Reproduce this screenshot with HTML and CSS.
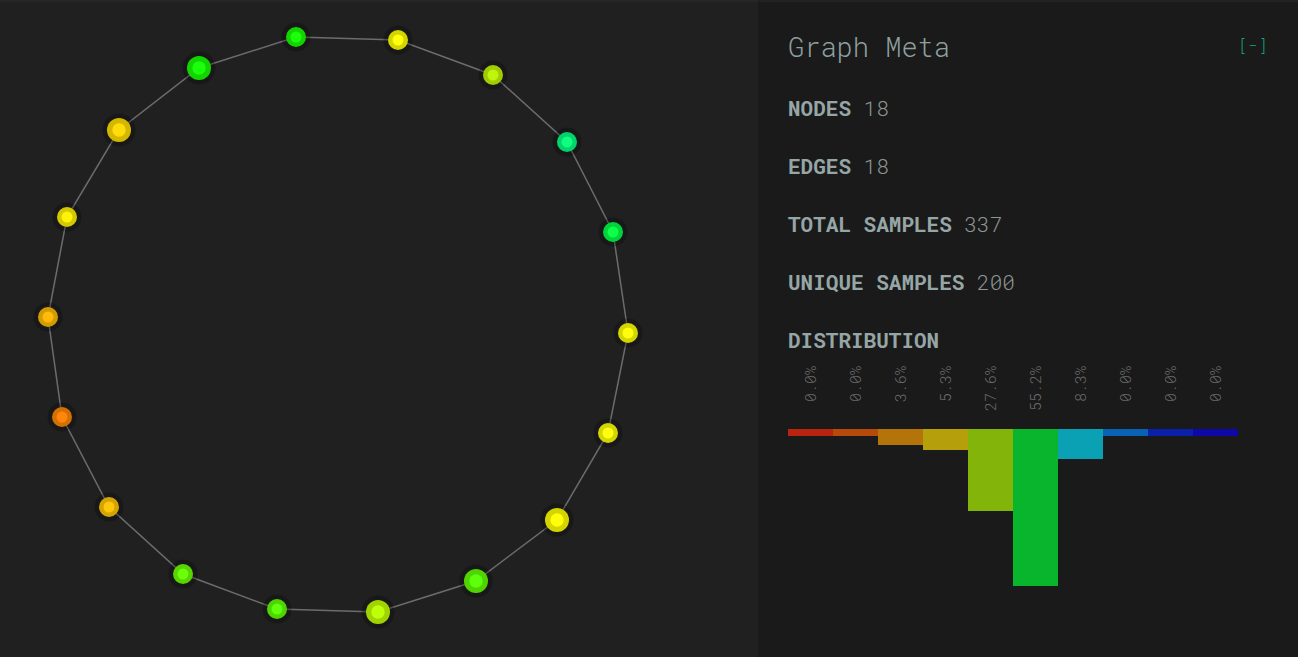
FILE: index.html
```html
<!DOCTYPE html>
<html lang="en">
<head>
    <meta charset="UTF-8">
    <meta name="viewport" content="width=device-width, initial-scale=1.0">
    <title>Graph Meta</title>
    <link rel="stylesheet" href="styles.css">
</head>
<body>
    <div class="graph-view">
        <svg class="graph" width="758" height="657" viewBox="0 0 758 657">
            <polygon class="edges" points="296,37 398,40 493,75 567,142 613,232 628,333 608,433 557,520 476,581 378,612 277,609 183,574 109,507 62,417 48,317 67,217 119,130 199,68"/>
            <g class="node"><circle class="halo" cx="296" cy="37" r="14.5"/><circle cx="296" cy="37" r="10" fill="#12d400"/><circle cx="296" cy="37" r="5.5" fill="#1cff0b"/></g>
            <g class="node"><circle class="halo" cx="398" cy="40" r="14.5"/><circle cx="398" cy="40" r="10" fill="#d4d400"/><circle cx="398" cy="40" r="5.5" fill="#ffff0d"/></g>
            <g class="node"><circle class="halo" cx="493" cy="75" r="14.5"/><circle cx="493" cy="75" r="10" fill="#a0cc00"/><circle cx="493" cy="75" r="5.5" fill="#bff50a"/></g>
            <g class="node"><circle class="halo" cx="567" cy="142" r="14.5"/><circle cx="567" cy="142" r="10" fill="#00d46a"/><circle cx="567" cy="142" r="5.5" fill="#10ff80"/></g>
            <g class="node"><circle class="halo" cx="613" cy="232" r="14.5"/><circle cx="613" cy="232" r="10" fill="#00d43a"/><circle cx="613" cy="232" r="5.5" fill="#0dff4a"/></g>
            <g class="node"><circle class="halo" cx="628" cy="333" r="14.5"/><circle cx="628" cy="333" r="10" fill="#d4d400"/><circle cx="628" cy="333" r="5.5" fill="#ffff0a"/></g>
            <g class="node"><circle class="halo" cx="608" cy="433" r="14.5"/><circle cx="608" cy="433" r="10" fill="#d4d400"/><circle cx="608" cy="433" r="5.5" fill="#ffff0a"/></g>
            <g class="node"><circle class="halo" cx="557" cy="520" r="16.5"/><circle cx="557" cy="520" r="12" fill="#d4d400"/><circle cx="557" cy="520" r="6.7" fill="#ffff0a"/></g>
            <g class="node"><circle class="halo" cx="476" cy="581" r="16.5"/><circle cx="476" cy="581" r="12" fill="#4fd400"/><circle cx="476" cy="581" r="6.7" fill="#5eff0a"/></g>
            <g class="node"><circle class="halo" cx="378" cy="612" r="16.5"/><circle cx="378" cy="612" r="12" fill="#a0d400"/><circle cx="378" cy="612" r="6.7" fill="#c0ff0a"/></g>
            <g class="node"><circle class="halo" cx="277" cy="609" r="14.5"/><circle cx="277" cy="609" r="10" fill="#50d400"/><circle cx="277" cy="609" r="5.5" fill="#60ff0b"/></g>
            <g class="node"><circle class="halo" cx="183" cy="574" r="14.5"/><circle cx="183" cy="574" r="10" fill="#58d400"/><circle cx="183" cy="574" r="5.5" fill="#6bff0a"/></g>
            <g class="node"><circle class="halo" cx="109" cy="507" r="14.5"/><circle cx="109" cy="507" r="10" fill="#d4a500"/><circle cx="109" cy="507" r="5.5" fill="#ffc60a"/></g>
            <g class="node"><circle class="halo" cx="62" cy="417" r="14.5"/><circle cx="62" cy="417" r="10" fill="#d47000"/><circle cx="62" cy="417" r="5.5" fill="#ff860a"/></g>
            <g class="node"><circle class="halo" cx="48" cy="317" r="14.5"/><circle cx="48" cy="317" r="10" fill="#d49b00"/><circle cx="48" cy="317" r="5.5" fill="#ffba0a"/></g>
            <g class="node"><circle class="halo" cx="67" cy="217" r="14.5"/><circle cx="67" cy="217" r="10" fill="#d4c900"/><circle cx="67" cy="217" r="5.5" fill="#fff20a"/></g>
            <g class="node"><circle class="halo" cx="119" cy="130" r="16.5"/><circle cx="119" cy="130" r="12" fill="#d4b800"/><circle cx="119" cy="130" r="6.7" fill="#ffdd0a"/></g>
            <g class="node"><circle class="halo" cx="199" cy="68" r="16.5"/><circle cx="199" cy="68" r="12" fill="#12d400"/><circle cx="199" cy="68" r="6.7" fill="#1aff0a"/></g>
        </svg>
    </div>

    <div class="meta-panel">
        <div class="meta-header">
            <h1>Graph Meta</h1>
            <span class="toggle">[-]</span>
        </div>
        <p class="meta-row"><b>NODES</b> 18</p>
        <p class="meta-row"><b>EDGES</b> 18</p>
        <p class="meta-row"><b>TOTAL SAMPLES</b> 337</p>
        <p class="meta-row"><b>UNIQUE SAMPLES</b> 200</p>
        <p class="meta-row"><b>DISTRIBUTION</b></p>

        <div class="dist-labels">
            <span>0.0%</span>
            <span>0.0%</span>
            <span>3.6%</span>
            <span>5.3%</span>
            <span>27.6%</span>
            <span>55.2%</span>
            <span>8.3%</span>
            <span>0.0%</span>
            <span>0.0%</span>
            <span>0.0%</span>
        </div>
        <div class="dist-bars">
            <div class="bar" style="height: 7px; background: #b9230f;"></div>
            <div class="bar" style="height: 7px; background: #b54a0b;"></div>
            <div class="bar" style="height: 16px; background: #b5740a;"></div>
            <div class="bar" style="height: 21px; background: #b59f0a;"></div>
            <div class="bar" style="height: 82px; background: #82b40a;"></div>
            <div class="bar" style="height: 157px; background: #0ab52e;"></div>
            <div class="bar" style="height: 30px; background: #0aa1b5;"></div>
            <div class="bar" style="height: 7px; background: #0a62b5;"></div>
            <div class="bar" style="height: 7px; background: #0a20a9;"></div>
            <div class="bar" style="height: 7px; background: #0e08a9;"></div>
        </div>
    </div>
</body>
</html>
```

FILE: styles.css
```css
body {
    margin: 0;
    padding: 0;
    display: flex;
    height: 100vh;
    overflow: hidden;
    font-family: "Roboto Mono", "DejaVu Sans Mono", "Liberation Mono", monospace;
    background-color: #1a1a1a;
}

.graph-view {
    width: 758px;
    flex: 0 0 758px;
    background-color: #202020;
    box-shadow: inset 0 2px 0 #262626;
}

.graph {
    display: block;
}

.edges {
    fill: none;
    stroke: #6c6c6c;
    stroke-width: 1.5;
}

.halo {
    fill: #000;
    opacity: 0.25;
}

.meta-panel {
    flex: 1;
    padding: 33px 30px 0 30px;
    background-color: #1a1a1a;
    box-shadow: inset 0 2px 0 #222;
}

.meta-header {
    display: flex;
    justify-content: space-between;
    align-items: flex-start;
}

.meta-header h1 {
    margin: 0;
    font-size: 27px;
    line-height: 27px;
    font-weight: 300;
    color: #8fa0a0;
}

.toggle {
    font-size: 16.7px;
    line-height: 24px;
    font-weight: 300;
    color: #15a077;
    cursor: pointer;
}

.meta-row {
    margin: 37px 0 0 0;
    font-size: 21px;
    line-height: 21px;
    font-weight: 300;
    color: #8d9696;
}

.meta-row:first-of-type {
    margin-top: 38px;
}

.meta-row b {
    font-weight: bold;
    color: #96a6a6;
}

.dist-labels {
    display: flex;
    height: 55px;
    margin-top: 15px;
}

.dist-labels span {
    flex: 0 0 45px;
    writing-mode: vertical-rl;
    transform: rotate(180deg);
    text-align: end;
    line-height: 45px;
    font-size: 15px;
    font-weight: 300;
    color: #6b6b6b;
}

.dist-bars {
    display: flex;
    align-items: flex-start;
    margin-top: 8px;
}

.bar {
    width: 45px;
}
```
